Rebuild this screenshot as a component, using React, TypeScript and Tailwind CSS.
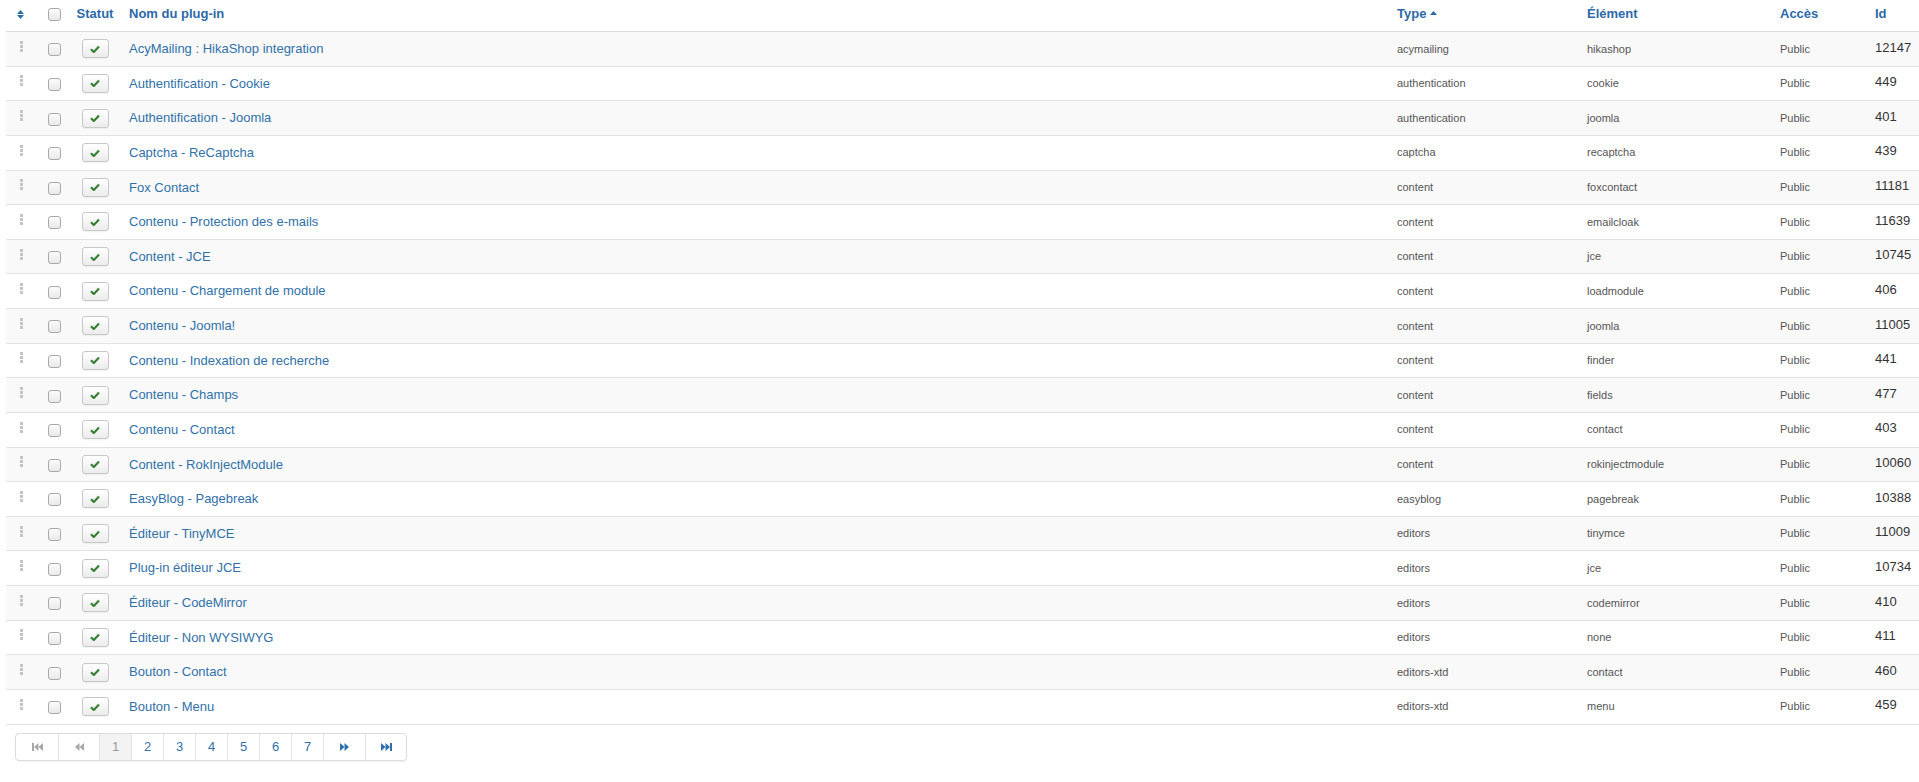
import React from "react";

type Plugin = {
  name: string;
  type: string;
  element: string;
  id: string;
};

const plugins: Plugin[] = [
  { name: "AcyMailing : HikaShop integration", type: "acymailing", element: "hikashop", id: "12147" },
  { name: "Authentification - Cookie", type: "authentication", element: "cookie", id: "449" },
  { name: "Authentification - Joomla", type: "authentication", element: "joomla", id: "401" },
  { name: "Captcha - ReCaptcha", type: "captcha", element: "recaptcha", id: "439" },
  { name: "Fox Contact", type: "content", element: "foxcontact", id: "11181" },
  { name: "Contenu - Protection des e-mails", type: "content", element: "emailcloak", id: "11639" },
  { name: "Content - JCE", type: "content", element: "jce", id: "10745" },
  { name: "Contenu - Chargement de module", type: "content", element: "loadmodule", id: "406" },
  { name: "Contenu - Joomla!", type: "content", element: "joomla", id: "11005" },
  { name: "Contenu - Indexation de recherche", type: "content", element: "finder", id: "441" },
  { name: "Contenu - Champs", type: "content", element: "fields", id: "477" },
  { name: "Contenu - Contact", type: "content", element: "contact", id: "403" },
  { name: "Content - RokInjectModule", type: "content", element: "rokinjectmodule", id: "10060" },
  { name: "EasyBlog - Pagebreak", type: "easyblog", element: "pagebreak", id: "10388" },
  { name: "Éditeur - TinyMCE", type: "editors", element: "tinymce", id: "11009" },
  { name: "Plug-in éditeur JCE", type: "editors", element: "jce", id: "10734" },
  { name: "Éditeur - CodeMirror", type: "editors", element: "codemirror", id: "410" },
  { name: "Éditeur - Non WYSIWYG", type: "editors", element: "none", id: "411" },
  { name: "Bouton - Contact", type: "editors-xtd", element: "contact", id: "460" },
  { name: "Bouton - Menu", type: "editors-xtd", element: "menu", id: "459" },
];

const gridCols = "grid grid-cols-[34px_31px_48px_1fr_190px_193px_95px_52px]";

function Checkbox() {
  return (
    <div className="w-[13px] h-[13px] rounded-[3px] border border-[#a9a9a9] bg-gradient-to-b from-[#fbfbfb] to-[#e9e9e9]" />
  );
}

function DragHandle() {
  return (
    <div className="flex flex-col gap-[1px] -mt-[5px]">
      <span className="block w-[3px] h-[3px] bg-[#c4c4c4]" />
      <span className="block w-[3px] h-[3px] bg-[#c4c4c4]" />
      <span className="block w-[3px] h-[3px] bg-[#c4c4c4]" />
    </div>
  );
}

function StatusButton() {
  return (
    <div className="w-[27px] h-[19px] rounded-[3px] border border-[#c8c8c8] bg-gradient-to-b from-white to-[#ececec] flex items-center justify-center shadow-[0_1px_1px_rgba(0,0,0,0.05)]">
      <svg width="10" height="8" viewBox="0 0 10 8">
        <path d="M1 4.2 L3.8 7 L9 1.6" fill="none" stroke="#378137" strokeWidth="2.2" />
      </svg>
    </div>
  );
}

function SortBoth() {
  return (
    <svg width="7" height="9" viewBox="0 0 7 9">
      <path d="M0 4 L3.5 0 L7 4 Z" fill="#2f6ead" />
      <path d="M0 5 L3.5 9 L7 5 Z" fill="#2f6ead" />
    </svg>
  );
}

function FirstIcon({ color }: { color: string }) {
  return (
    <svg width="11" height="8" viewBox="0 0 11 8">
      <rect x="0" y="0" width="2" height="8" fill={color} />
      <path d="M6.5 0 L2 4 L6.5 8 Z" fill={color} />
      <path d="M11 0 L6.5 4 L11 8 Z" fill={color} />
    </svg>
  );
}

function PrevIcon({ color }: { color: string }) {
  return (
    <svg width="9" height="8" viewBox="0 0 9 8">
      <path d="M4.5 0 L0 4 L4.5 8 Z" fill={color} />
      <path d="M9 0 L4.5 4 L9 8 Z" fill={color} />
    </svg>
  );
}

function NextIcon({ color }: { color: string }) {
  return (
    <svg width="9" height="8" viewBox="0 0 9 8">
      <path d="M0 0 L4.5 4 L0 8 Z" fill={color} />
      <path d="M4.5 0 L9 4 L4.5 8 Z" fill={color} />
    </svg>
  );
}

function LastIcon({ color }: { color: string }) {
  return (
    <svg width="11" height="8" viewBox="0 0 11 8">
      <path d="M0 0 L4.5 4 L0 8 Z" fill={color} />
      <path d="M4.5 0 L9 4 L4.5 8 Z" fill={color} />
      <rect x="9" y="0" width="2" height="8" fill={color} />
    </svg>
  );
}

function Pagination() {
  const pages = ["1", "2", "3", "4", "5", "6", "7"];
  return (
    <div className="ml-[9px] mt-[8px] inline-flex h-[28px] rounded-[4px] border border-[#dcdcdc] shadow-[0_1px_2px_rgba(0,0,0,0.06)] overflow-hidden">
      <div className="w-[42px] flex items-center justify-center">
        <FirstIcon color="#a8a8a8" />
      </div>
      <div className="w-[41px] flex items-center justify-center border-l border-[#e3e3e3]">
        <PrevIcon color="#a8a8a8" />
      </div>
      {pages.map((p) => (
        <div
          key={p}
          className={
            p === "1"
              ? "w-[32px] flex items-center justify-center border-l border-[#e3e3e3] bg-[#f3f3f3] text-[13px] text-[#999]"
              : "w-[32px] flex items-center justify-center border-l border-[#e3e3e3] text-[13px] text-[#3071a9]"
          }
        >
          {p}
        </div>
      ))}
      <div className="w-[42px] flex items-center justify-center border-l border-[#e3e3e3]">
        <NextIcon color="#2f6ead" />
      </div>
      <div className="w-[41px] flex items-center justify-center border-l border-[#e3e3e3]">
        <LastIcon color="#2f6ead" />
      </div>
    </div>
  );
}

export default function App() {
  return (
    <div className="min-h-screen bg-white pl-[6px] font-['Liberation_Sans',Arial,sans-serif] text-[#333]">
      <div className={`${gridCols} h-[32px] border-b border-[#dadada] text-[13px] font-bold text-[#2c69a8]`}>
        <div className="flex items-center pl-[11px] pb-[3px]">
          <SortBoth />
        </div>
        <div className="flex items-center pl-[8px] pb-[3px]">
          <Checkbox />
        </div>
        <div className="flex items-center justify-center pb-[3px]">Statut</div>
        <div className="flex items-center pl-[10px] pb-[3px]">Nom du plug-in</div>
        <div className="flex items-center pl-[8px] pb-[3px] gap-[4px]">
          Type
          <svg width="7" height="4" viewBox="0 0 7 4" className="mb-[2px]">
            <path d="M0 4 L3.5 0 L7 4 Z" fill="#2c69a8" />
          </svg>
        </div>
        <div className="flex items-center pl-[8px] pb-[3px]">Élément</div>
        <div className="flex items-center pl-[8px] pb-[3px]">Accès</div>
        <div className="flex items-center pl-[8px] pb-[3px]">Id</div>
      </div>
      {plugins.map((p, i) => (
        <div
          key={p.id}
          className={`${gridCols} h-[34.63px] border-b border-[#e2e2e2] ${i % 2 === 0 ? "bg-[#f9f9f9]" : "bg-white"}`}
        >
          <div className="flex items-center pl-[14px]">
            <DragHandle />
          </div>
          <div className="flex items-center pl-[8px] pt-[2px]">
            <Checkbox />
          </div>
          <div className="flex items-center justify-center">
            <StatusButton />
          </div>
          <div className="flex items-center pl-[10px] text-[13px] text-[#3071a9]">{p.name}</div>
          <div className="flex items-center pl-[8px] text-[11px] text-[#555]">{p.type}</div>
          <div className="flex items-center pl-[8px] text-[11px] text-[#555]">{p.element}</div>
          <div className="flex items-center pl-[8px] text-[11px] text-[#555]">Public</div>
          <div className="flex items-center pl-[8px] pb-[3px] text-[13px] text-[#333]">{p.id}</div>
        </div>
      ))}
      <Pagination />
    </div>
  );
}
